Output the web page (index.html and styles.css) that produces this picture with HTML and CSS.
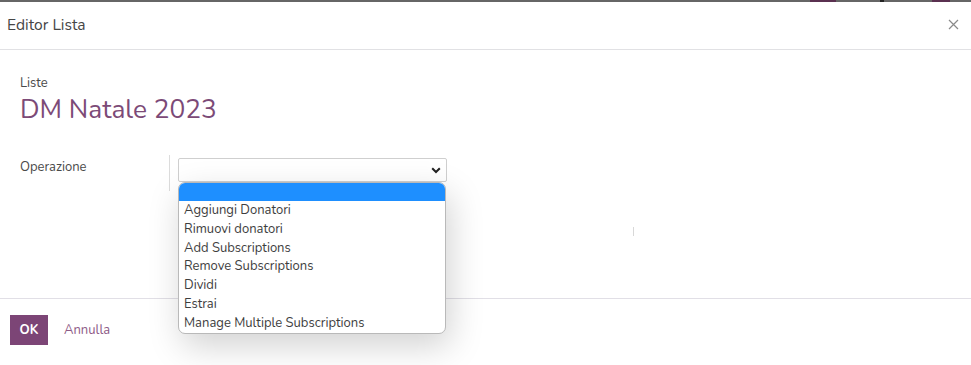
FILE: index.html
```html
<!DOCTYPE html>
<html lang="it">
<head>
<meta charset="utf-8">
<title>Editor Lista</title>
<link rel="stylesheet" href="styles.css">
</head>
<body>
<div class="topbar">
  <span class="blob b1"></span><span class="blob b2"></span><span class="blob b3"></span>
</div>
<div class="modal">
  <header class="modal-header">
    <h4 class="modal-title">Editor Lista</h4>
    <button class="close" aria-label="Chiudi">
      <svg width="11" height="11" viewBox="0 0 11 11"><path d="M1 1L10 10M10 1L1 10" stroke="#8a8a8a" stroke-width="1.2" fill="none"/></svg>
    </button>
  </header>
  <main class="modal-body">
    <div class="title-block">
      <div class="small-label">Liste</div>
      <h1 class="record-name">DM Natale 2023</h1>
    </div>
    <div class="form-grid">
      <div class="field-row">
        <label class="field-label">Operazione</label>
        <div class="field-value">
          <div class="select">
            <svg class="chev" width="10" height="7" viewBox="0 0 10 7"><path d="M1.2 1.2L5 5L8.8 1.2" stroke="#222" stroke-width="2" fill="none"/></svg>
            <ul class="dropdown">
              <li class="opt active">&nbsp;</li>
              <li class="opt">Aggiungi Donatori</li>
              <li class="opt">Rimuovi donatori</li>
              <li class="opt">Add Subscriptions</li>
              <li class="opt">Remove Subscriptions</li>
              <li class="opt">Dividi</li>
              <li class="opt">Estrai</li>
              <li class="opt">Manage Multiple Subscriptions</li>
            </ul>
          </div>
        </div>
      </div>
      <div class="second-col"><span class="sep"></span></div>
    </div>
  </main>
  <footer class="modal-footer">
    <button class="btn-primary">OK</button>
    <button class="btn-link">Annulla</button>
  </footer>
</div>
</body>
</html>
```
FILE: styles.css
```css
* { box-sizing: border-box; }
html, body { margin: 0; padding: 0; }
body {
  width: 971px;
  height: 365px;
  overflow: hidden;
  background: #fff;
  font-family: "Nunito", "Lato", "Noto Sans", sans-serif;
  color: #4a4a4a;
  font-size: 13px;
}
.topbar {
  height: 2px;
  background: #666;
  position: relative;
}
.blob { position: absolute; top: 0; height: 2px; background: #5a3050; }
.b1 { left: 810px; width: 26px; }
.b2 { left: 880px; width: 4px; background: #222; }
.b3 { left: 932px; width: 18px; }
.modal-header {
  height: 48px;
  display: flex;
  align-items: center;
  justify-content: space-between;
  padding: 0 12px 2px 7px;
  border-bottom: 1px solid #e1e1e4;
}
.modal-title {
  margin: 0;
  font-size: 15.6px;
  font-weight: 400;
  color: #464646;
}
.close {
  border: 0;
  background: none;
  padding: 0;
  display: flex;
}
.modal-body {
  height: 248px;
  padding: 24px 20px 0 20px;
}
.small-label {
  font-size: 13px;
  color: #4a4a4a;
  line-height: 18px;
}
.record-name {
  margin: 0;
  font-size: 26.3px;
  font-weight: 400;
  color: #7c4a77;
  line-height: 34px;
}
.form-grid {
  display: flex;
  margin-top: 29px;
}
.field-row {
  display: flex;
  width: 427px;
}
.field-label {
  width: 149px;
  padding-top: 3px;
  color: #4a4a4a;
}
.field-value {
  border-left: 1px solid #dcdcdc;
  padding: 3px 0 12px 8px;
  height: 36px;
}
.select {
  position: relative;
  width: 269px;
  height: 24px;
  border: 1px solid #cfcfcf;
  border-radius: 2px;
  background: #fff;
}
.chev { position: absolute; right: 5px; top: 8px; }
.dropdown {
  position: absolute;
  left: -1px;
  top: 23px;
  width: 268px;
  margin: 0;
  padding: 0;
  list-style: none;
  background: #fff;
  border: 1px solid #b9b9b9;
  border-radius: 7px;
  overflow: hidden;
  box-shadow: 4px 12px 34px rgba(0,0,0,0.18);
  z-index: 5;
}
.opt {
  height: 18.8px;
  line-height: 18.8px;
  padding-left: 5px;
  font-size: 13px;
  color: #3e3e3e;
  white-space: nowrap;
}
.opt.active {
  background: #1e8fff;
  height: 18px;
}
.second-col {
  flex: 1;
  position: relative;
}
.sep {
  position: absolute;
  left: 186px;
  top: 72px;
  width: 1px;
  height: 9px;
  background: #d8d8d8;
}
.modal-footer {
  border-top: 1px solid #e1dfe6;
  height: 67px;
  display: flex;
  align-items: flex-start;
  padding: 16px 10px 0 10px;
  gap: 6px;
}
.btn-primary {
  width: 38px;
  height: 30px;
  border: 0;
  border-radius: 0;
  background: #7c4576;
  color: #fff;
  font-family: inherit;
  font-size: 13px;
  font-weight: 700;
  padding: 0;
}
.btn-link {
  border: 0;
  background: none;
  color: #8e5b87;
  font-family: inherit;
  font-size: 13px;
  padding: 0 10px;
  height: 30px;
}
```
